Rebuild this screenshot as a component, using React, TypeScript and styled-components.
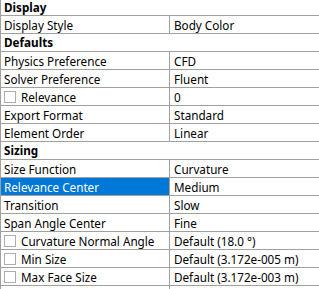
import React from "react";
import styled, { createGlobalStyle } from "styled-components";

const Global = createGlobalStyle`
  html, body { margin: 0; padding: 0; background: #ffffff; }
  body { font-family: "Segoe UI", "Noto Sans", "Open Sans", sans-serif; font-size: 11.7px; color: #000; }
`;

const Viewport = styled.div`
  width: 319px;
  height: 289px;
  overflow: hidden;
  background: #fff;
`;

const Grid = styled.div`
  border-left: 1px solid #a0a0a0;
  display: flex;
  flex-direction: column;
`;

const Row = styled.div`
  display: grid;
  grid-template-columns: 169px 1fr;
  height: 17px;
  border-bottom: 1px solid #a0a0a0;
`;

const Header = styled.div<{ $first?: boolean }>`
  height: ${(p) => (p.$first ? 15 : 17)}px;
  border-bottom: 1px solid #a0a0a0;
  font-weight: bold;
  line-height: ${(p) => (p.$first ? 15 : 17)}px;
  padding-left: 3px;
  white-space: nowrap;
`;

const NameCell = styled.div<{ $selected?: boolean }>`
  display: flex;
  align-items: center;
  gap: 5px;
  padding-left: 3px;
  border-right: 1px solid #a0a0a0;
  background: ${(p) => (p.$selected ? "#0078d7" : "#fff")};
  color: ${(p) => (p.$selected ? "#fff" : "#000")};
  white-space: nowrap;
  overflow: hidden;
`;

const ValueCell = styled.div`
  display: flex;
  align-items: center;
  padding-left: 4px;
  white-space: nowrap;
  overflow: hidden;
`;

const Check = styled.span`
  width: 10px;
  height: 10px;
  border: 1px solid #adadad;
  background: #fff;
  flex: none;
`;

type Item =
  | { kind: "header"; label: string }
  | { kind: "row"; label: string; value: string; check?: boolean; selected?: boolean };

const items: Item[] = [
  { kind: "header", label: "Display" },
  { kind: "row", label: "Display Style", value: "Body Color" },
  { kind: "header", label: "Defaults" },
  { kind: "row", label: "Physics Preference", value: "CFD" },
  { kind: "row", label: "Solver Preference", value: "Fluent" },
  { kind: "row", label: "Relevance", value: "0", check: true },
  { kind: "row", label: "Export Format", value: "Standard" },
  { kind: "row", label: "Element Order", value: "Linear" },
  { kind: "header", label: "Sizing" },
  { kind: "row", label: "Size Function", value: "Curvature" },
  { kind: "row", label: "Relevance Center", value: "Medium", selected: true },
  { kind: "row", label: "Transition", value: "Slow" },
  { kind: "row", label: "Span Angle Center", value: "Fine" },
  { kind: "row", label: "Curvature Normal Angle", value: "Default (18.0 °)", check: true },
  { kind: "row", label: "Min Size", value: "Default (3.172e-005 m)", check: true },
  { kind: "row", label: "Max Face Size", value: "Default (3.172e-003 m)", check: true },
  { kind: "row", label: "", value: "" },
];

export default function App() {
  return (
    <>
      <Global />
      <Viewport>
        <Grid>
          {items.map((it, i) =>
            it.kind === "header" ? (
              <Header key={i} $first={i === 0}>{it.label}</Header>
            ) : (
              <Row key={i}>
                <NameCell $selected={it.selected}>
                  {it.check && <Check />}
                  <span>{it.label}</span>
                </NameCell>
                <ValueCell>{it.value}</ValueCell>
              </Row>
            )
          )}
        </Grid>
      </Viewport>
    </>
  );
}
